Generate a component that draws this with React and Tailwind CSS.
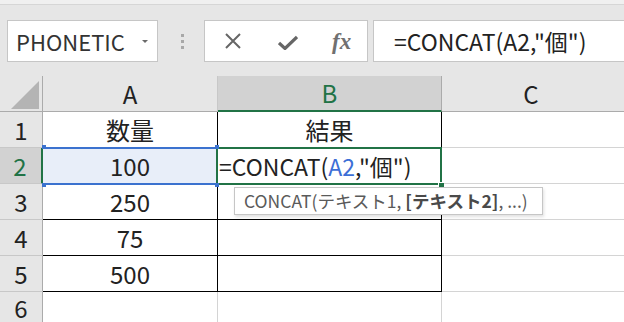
import React from "react";

const font = { fontFamily: '"Noto Sans CJK JP", "Noto Sans", sans-serif' };

const rows = [
  { n: "1", a: "数量", b: "結果" },
  { n: "2", a: "100", b: "" },
  { n: "3", a: "250", b: "" },
  { n: "4", a: "75", b: "" },
  { n: "5", a: "500", b: "" },
  { n: "6", a: null, b: null },
];

function Toolbar() {
  return (
    <div className="bg-[#e6e6e6] h-[71px] flex items-start pt-[15px] pl-[7px]">
      <div className="shrink-0 w-[151px] h-[42px] bg-white border border-[#c6c6c6] flex items-center pl-[8px] pr-[9px]">
        <span className="text-[22px] text-[#333] leading-none">PHONETIC</span>
        <span className="ml-auto w-0 h-0 border-l-[3.5px] border-r-[3.5px] border-t-[3px] border-l-transparent border-r-transparent border-t-[#6a6a6a]" />
      </div>
      <div className="shrink-0 w-[46px] h-[42px] flex flex-col items-center justify-center gap-[3px] pl-[2px]">
        <span className="w-[3px] h-[3px] bg-[#a8a8a8]" />
        <span className="w-[3px] h-[3px] bg-[#a8a8a8]" />
        <span className="w-[3px] h-[3px] bg-[#a8a8a8]" />
      </div>
      <div className="shrink-0 w-[164px] h-[42px] bg-white border border-[#c6c6c6] flex items-center">
        <svg width="18" height="16" viewBox="0 0 18 16" className="ml-[19px]">
          <path d="M2 1 L16 15 M16 1 L2 15" stroke="#666" strokeWidth="2" fill="none" />
        </svg>
        <svg width="20" height="15" viewBox="0 0 20 15" className="ml-[36px] mt-[2px]">
          <path d="M1 8 L7 13.5 L19 2" stroke="#666" strokeWidth="3.2" fill="none" strokeLinejoin="miter" />
        </svg>
        <span
          className="ml-[34px] text-[23px] italic font-bold text-[#707070] leading-none"
          style={{ fontFamily: '"Liberation Serif", serif' }}
        >
          fx
        </span>
      </div>
      <div className="shrink-0 ml-[5px] w-[300px] h-[42px] bg-white border border-[#c6c6c6] flex items-center pl-[20px]">
        <span className="text-[23px] text-[#222] leading-none">=CONCAT(A2,"個")</span>
      </div>
    </div>
  );
}

function Sheet() {
  return (
    <div className="relative">
      <div className="flex h-[36px] bg-[#e6e6e6] leading-none">
        <div className="w-[43px] border-r border-b border-[#ababab] relative">
          <svg width="28" height="28" viewBox="0 0 28 28" className="absolute left-[11px] top-[5px]">
            <polygon points="28,0 28,28 0,28" fill="#b4b4b4" />
          </svg>
        </div>
        <div className="w-[175px] border-r border-[#c8c8c8] border-b border-b-[#ababab] flex items-center justify-center text-[24px] text-[#222]">
          A
        </div>
        <div className="w-[224px] bg-[#d2d2d2] border-r border-r-[#ababab] border-b-2 border-b-[#217346] flex items-center justify-center text-[24px] text-[#217346]">
          B
        </div>
        <div className="flex-1 border-b border-[#ababab] flex items-center justify-center text-[24px] text-[#222] pr-[4px]">
          C
        </div>
      </div>
      {rows.map((r) => {
        const inTable = r.a !== null;
        const active = r.n === "2";
        return (
          <div key={r.n} className="flex h-[36px] leading-none">
            <div
              className={
                active
                  ? "w-[43px] bg-[#d2d2d2] border-r-2 border-r-[#217346] border-b border-b-[#c8c8c8] flex items-center justify-center text-[24px] text-[#217346]"
                  : "w-[43px] bg-[#e6e6e6] border-r border-r-[#ababab] border-b border-b-[#c8c8c8] flex items-center justify-center text-[24px] text-[#222]"
              }
            >
              <span className={active ? "-ml-[1px]" : inTable ? "" : "-mt-[4px]"}>{r.n}</span>
            </div>
            <div
              className={
                (inTable
                  ? "border-r border-b border-black "
                  : "border-r border-b border-[#d4d4d4] ") +
                (active ? "bg-[#e8eef9] " : "bg-white ") +
                "w-[175px] flex items-center justify-center text-[24px] text-[#222]"
              }
            >
              {r.a}
            </div>
            <div
              className={
                (inTable ? "border-r border-b border-black " : "border-r border-b border-[#d4d4d4] ") +
                "w-[224px] bg-white flex items-center justify-center text-[24px] text-[#222]"
              }
            >
              {r.b}
            </div>
            <div className="flex-1 bg-white border-b border-[#d4d4d4]" />
          </div>
        );
      })}

      {/* reference highlight on A2 */}
      <div className="absolute left-[42px] top-[71px] w-[176px] h-[38px] border-y-2 border-[#3b72cf]" />
      <span className="absolute left-[42px] top-[69px] w-[4px] h-[4px] bg-[#3b72cf]" />
      <span className="absolute left-[42px] top-[107px] w-[4px] h-[4px] bg-[#3b72cf]" />

      {/* active cell B2 in edit mode */}
      <div className="absolute left-[216px] top-[71px] w-[226px] h-[38px] border-2 border-[#217346] bg-white flex items-center pl-[1px]">
        <span className="text-[23px] text-[#222] leading-none whitespace-nowrap">
          =CONCAT(<span className="text-[#3d6fd6]">A2</span>,"個")
        </span>
      </div>
      <span className="absolute left-[215px] top-[69px] w-[4px] h-[4px] bg-[#3b72cf]" />
      <span className="absolute left-[215px] top-[107px] w-[4px] h-[4px] bg-[#3b72cf]" />
      <span className="absolute left-[438px] top-[106px] w-[6px] h-[5px] bg-[#217346] border-l border-t border-white" />

      {/* function tooltip */}
      <div className="absolute left-[234px] top-[111px] w-[309px] h-[28px] bg-white border border-[#c6c6c6] shadow-[1px_2px_3px_rgba(0,0,0,0.12)] flex items-center pl-[9px]">
        <span className="text-[17.5px] text-[#5a5a5a] leading-none whitespace-nowrap">
          CONCAT(テキスト1, <span className="font-bold text-[#4a4a4a]">[テキスト2]</span>, ...)
        </span>
      </div>
    </div>
  );
}

export default function App() {
  return (
    <div className="w-[624px] h-[322px] overflow-hidden bg-[#e6e6e6]" style={font}>
      <div className="h-[5px] bg-[#f0f0f0] border-b border-[#d6d6d6]" />
      <Toolbar />
      <Sheet />
    </div>
  );
}
